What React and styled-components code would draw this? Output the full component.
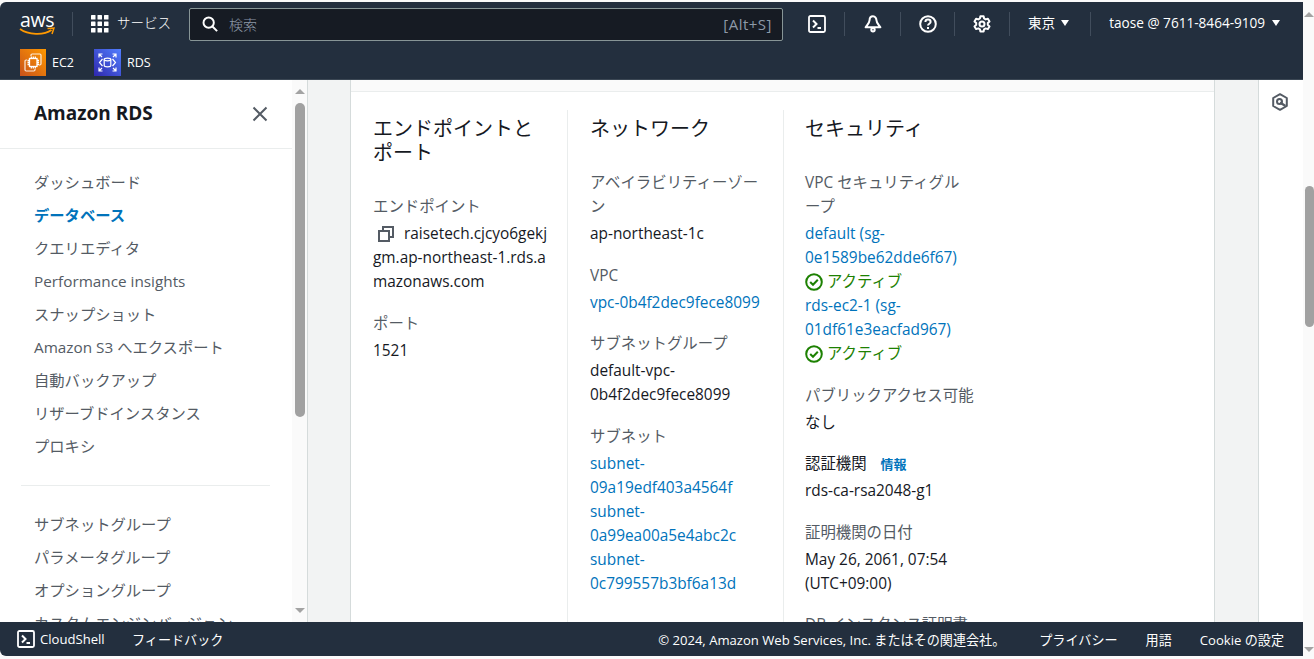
import React from "react";
import styled, { createGlobalStyle } from "styled-components";

const FONT = `"Open Sans", "Noto Sans CJK JP", sans-serif`;

const Global = createGlobalStyle`
  html, body { margin: 0; padding: 0; background: #fff; height: 100%; overflow: hidden; }
  #root { height: 100%; }
  * { box-sizing: border-box; }
`;

const Page = styled.div`
  width: 1314px; height: 659px; display: flex; font-family: ${FONT}; background: #fff; overflow: hidden;
`;
const Frame = styled.div`
  width: 1303px; display: flex; flex-direction: column; padding-top: 2px; padding-bottom: 3px; background: #fafafa;
`;
const Header = styled.header`
  flex: none; height: 78px; background: #232f3e; border-top-left-radius: 6px; border-bottom: 1px solid #3b4754; display: flex; flex-direction: column;
`;
const TopRow = styled.div`
  height: 44px; display: flex; align-items: center; padding: 0 0 0 20px; flex: none;
`;
const Logo = styled.div`
  width: 34px; height: 24px; position: relative; color: #fff; font-size: 19.500px; line-height: 15px; letter-spacing: -0.3px; flex: none;
  svg { position: absolute; left: -1px; bottom: -1px; }
`;
const Sep = styled.span`
  flex: none; width: 1px; height: ${p => p.$h || 24}px; background: #414d5c; margin: ${p => p.$m || "0"};
`;
const ServicesButton = styled.div`
  display: flex; align-items: center; gap: 8px; color: #fff; font-size: 13.500px; font-weight: 300; line-height: 18px; margin-left: 18px; width: 98px; flex: none;
  span { margin-top: -3px; }
`;
const SearchBox = styled.div`
  width: 594px; height: 33px; flex: none; background: #161b23; border: 1px solid #879596; border-radius: 2px; display: flex; align-items: center; padding: 0 10px 2px 12px; color: #8d99a8; font-size: 14px;
  margin-top: 1px;
`;
const SearchText = styled.span`
  margin-left: 11px; flex: 1; font-weight: 300;
`;
const SearchKey = styled.span`
  font-size: 15px; letter-spacing: .5px;
`;
const IconSlot = styled.div`
  width: ${p => p.$w || 54}px; padding-left: ${p => p.$pl || 0}px; flex: none; display: flex; justify-content: center; align-items: center; color: #fff;
`;
const HeaderMenu = styled.div`
  flex: none; display: flex; align-items: center; gap: 6px; color: #fff; font-size: 13.600px; line-height: 18px; padding: ${p => p.$p}; 
  span { margin-top: -3px; }
`;
const Caret = styled.i`
  width: 0; height: 0; margin-left: ${p => p.$m || 0}px; margin-top: -2px; border-left: 4.500px solid transparent; border-right: 4.500px solid transparent; border-top: 6px solid #fff; flex: none;
`;
const FavRow = styled.div`
  display: flex; align-items: center; padding-left: 20px; height: 33px; flex: none; color: #fff; font-size: 12.500px;
`;
const Fav = styled.div`
  display: flex; align-items: center; gap: 6px; width: 74px; flex: none;
`;

const Main = styled.div`
  flex: 1; min-height: 0; display: flex; overflow: hidden;
`;
const Sidebar = styled.aside`
  width: 292px; flex: none; background: #fff; overflow: hidden;
`;
const SidebarHead = styled.div`
  height: 69px; display: flex; align-items: center; justify-content: space-between; padding: 0 24px 0 34px; border-bottom: 1px solid #eaeded;
  h2 { margin: -2px 0 0; font-size: 19px; font-weight: 700; color: #16191f; }
`;
const NavList = styled.ul`
  list-style: none; margin: 0; padding: ${p => p.$pad};
`;
const NavItem = styled.li`
  height: 33px; line-height: 33px; padding-left: 34px; font-size: 15.300px; white-space: nowrap; font-weight: ${p => (p.$active ? 700 : 400)}; color: ${p => (p.$active ? "#0073bb" : "#545b64")};
`;
const NavDivider = styled.hr`
  margin: 22px 22px 22px 21px; border: 0; border-top: 1px solid #eaeded;
`;
const Bar = styled.div`
  width: ${p => p.$w}px; flex: none; background: ${p => p.$bg || "#fafafa"}; display: flex; flex-direction: column; align-items: center; height: ${p => p.$h || "100%"};
`;
const Arrow = styled.i`
  flex: none; width: 0; height: 0; border-left: 5px solid transparent; border-right: 5px solid transparent; margin: ${p => p.$m};
  ${p => (p.$up ? "border-bottom: 5px solid #a3a3a3;" : "border-top: 5px solid #a3a3a3;")}
`;
const Track = styled.div`
  flex: 1; width: 100%; display: flex; justify-content: center; padding-top: ${p => p.$top}px;
`;
const Thumb = styled.div`
  width: ${p => p.$w}px; height: ${p => p.$h}px; margin-left: ${p => p.$ml || 0}px; background: #a1a1a1; border-radius: 5px;
`;
const Content = styled.main`
  flex: 1; min-width: 0; background: #f2f3f3; border-left: 1px solid #d5dbdb; padding-left: 42px; padding-right: 43px; overflow: hidden;
`;
const Card = styled.section`
  background: #fff; border-left: 1px solid #d5dbdb; border-right: 1px solid #d5dbdb; height: 100%; display: flex; flex-direction: column;
`;
const CardTop = styled.div`
  height: 12px; flex: none; background: #fafafa; border-bottom: 1px solid #eaeded;
`;
const Columns = styled.div`
  display: flex; padding: 18px 0 0 0; flex: 1; min-height: 0;
`;
const Column = styled.div`
  flex: none; width: ${p => p.$w}px; padding: 7px ${p => p.$pr}px 0 ${p => p.$pl}px; border-left: ${p => (p.$first ? "none" : "1px solid #eaeded")}; min-height: 640px;
`;
const ColTitle = styled.h3`
  margin: 0 0 30px; font-size: 20px; line-height: 24px; font-weight: 400; color: #16191f;
`;
const Field = styled.div`
  margin-bottom: 17.500px; font-size: 15.400px; line-height: 24px; color: #16191f;
`;
const Label = styled.div`
  color: #545b64; margin-bottom: 3px;
  a { margin-left: 14px; font-size: 13px; font-weight: 600; color: #0073bb; }
`;
const DarkLabel = styled(Label)`
  color: #16191f;
`;
const Value = styled.div`
  color: #16191f;
`;
const EndpointValue = styled(Value)`
  word-break: break-all;
  svg { vertical-align: -3px; margin: 0 10px 0 5px; }
`;
const LinkText = styled.a`
  display: block; color: #0073bb; text-decoration: none;
`;
const Status = styled.div`
  display: flex; align-items: center; gap: 4px; color: #1d8102; height: 24px;
`;
const Rail = styled.div`
  width: 45px; flex: none; background: #fff; border-left: 1px solid #d5dbdb; display: flex; justify-content: center; padding-top: 13px; padding-right: 2px; color: #545b64;
`;
const Footer = styled.footer`
  flex: none; height: 34px; background: #232f3e; border-bottom-left-radius: 6px; display: flex; align-items: center; color: #fff; font-size: 13.100px; padding: 0 19px 0 17px;
`;
const FooterShell = styled.div`
  display: flex; align-items: center; gap: 5px; width: 115px; flex: none;
`;
const FooterLinks = styled.nav`
  margin-left: auto; display: flex; gap: 28px; align-items: center;
  span:first-child { margin-right: 6px; }
`;

const ShellIcon = ({ s = 18 }) => (
  <svg width={s} height={s} viewBox="0 0 18 18" fill="none" stroke="#fff" strokeWidth="1.800">
    <rect x="1" y="1" width="16" height="16" rx="1.500" />
    <path d="M5 5.500 8.500 9 5 12.500M9.500 13h3.500" strokeWidth="2" />
  </svg>
);
const Grid = () => (
  <svg width="18" height="18" viewBox="0 0 18 18" fill="#fff">
    {[0, 6.5, 13].flatMap(x => [0, 6.5, 13].map(y => <rect key={x + "-" + y} x={x} y={y} width="4.500" height="4.500" rx=".5" />))}
  </svg>
);
const Search = () => (
  <svg width="16" height="16" viewBox="0 0 18 18" fill="none" stroke="#fff" strokeWidth="2.200">
    <circle cx="7.500" cy="7.500" r="5.800" /><path d="m11.500 11.500 5.500 5.500" />
  </svg>
);
const Bell = () => (
  <svg width="18" height="18" viewBox="0 0 18 18" fill="none" stroke="#fff" strokeWidth="2">
    <path d="M9 1.300c-2.300 0-3.400 2-3.400 3.800 0 3-2.300 5-4 7.200h14.800c-1.700-2.200-4-4.200-4-7.200 0-1.800-1.100-3.800-3.400-3.800Z" strokeLinejoin="round" />
    <circle cx="9" cy="14.800" r="1.700" />
  </svg>
);
const Help = () => (
  <svg width="18" height="18" viewBox="0 0 18 18" fill="none" stroke="#fff" strokeWidth="2">
    <circle cx="9" cy="9" r="7.800" />
    <path d="M6.400 7c0-1.500 1.100-2.400 2.600-2.400s2.600.9 2.600 2.300c0 1.800-2.600 1.900-2.600 3.700" />
    <path d="M9 12v2" />
  </svg>
);
const Gear = () => (
  <svg width="18" height="18" viewBox="0 0 18 18" fill="none" stroke="#fff" strokeWidth="2" strokeLinejoin="round">
    <circle cx="9" cy="9" r="2.500" />
    <path d="M7.400 1.200h3.200l.5 2.300 1.500.9 2.300-.7 1.600 2.700-1.700 1.600v1.800l1.700 1.600-1.600 2.700-2.300-.7-1.500.9-.5 2.300H7.400l-.5-2.300-1.500-.9-2.300.7-1.600-2.700 1.700-1.600V8l-1.700-1.600 1.600-2.700 2.300.7 1.500-.9Z" />
  </svg>
);
const Ec2Icon = () => (
  <svg width="26" height="27" viewBox="0 0 26 27">
    <defs><linearGradient id="ec" x1="0" y1="1" x2="1" y2="0"><stop offset="0" stopColor="#c8511b" /><stop offset="1" stopColor="#ff9900" /></linearGradient></defs>
    <rect width="26" height="27" fill="url(#ec)" />
    <g fill="none" stroke="#fff" strokeWidth="1.200" strokeOpacity=".85">
      <path d="M11 7V6.200c0-.7.500-1.200 1.200-1.200h7.600c.7 0 1.200.5 1.200 1.200v8.600c0 .7-.5 1.200-1.200 1.200H19" />
      <path d="M7 11H6.200c-.7 0-1.200.5-1.200 1.200v8.600c0 .7.500 1.200 1.200 1.200h7.600c.7 0 1.200-.5 1.200-1.200V20" />
    </g>
    <g fill="none" stroke="#fff" strokeWidth="1.300">
      <rect x="9.500" y="9.500" width="7.500" height="8" />
      <path d="M11.300 7.500v2M13.300 7.500v2M15.300 7.500v2M11.300 17.500v2M13.300 17.500v2M15.300 17.500v2M7.500 11.500h2M7.500 13.500h2M7.500 15.500h2M17 11.500h2M17 13.500h2M17 15.500h2" />
    </g>
  </svg>
);
const RdsIcon = () => (
  <svg width="27" height="27" viewBox="0 0 27 27">
    <defs><linearGradient id="rd" x1="0" y1="1" x2="1" y2="0"><stop offset="0" stopColor="#2e27ad" /><stop offset="1" stopColor="#527fff" /></linearGradient></defs>
    <rect width="27" height="27" fill="url(#rd)" />
    <g fill="none" stroke="#fff" strokeWidth="1.200">
      <path d="M5 8.500V5h3.500M5 5l3 3M22 8.500V5h-3.500M22 5l-3 3M5 18.500V22h3.500M5 22l3-3M22 18.500V22h-3.500M22 22l-3-3" />
      <ellipse cx="13.500" cy="10.500" rx="3.300" ry="1.300" />
      <path d="M10.200 10.500v6c0 .7 1.500 1.300 3.300 1.300s3.300-.6 3.300-1.300v-6" />
      <path d="M8.500 10 5.500 13.500l3 3.500M18.500 10l3 3.500-3 3.500" />
    </g>
  </svg>
);
const Copy = () => (
  <svg width="16" height="16" viewBox="0 0 16 16" fill="none" stroke="#545b64" strokeWidth="2">
    <rect x="1" y="5" width="10" height="10" />
    <path d="M5 4V1h10v10h-3" />
  </svg>
);
const Check = () => (
  <svg width="18" height="18" viewBox="0 0 18 18" fill="none" stroke="#1d8102" strokeWidth="2">
    <circle cx="9" cy="9" r="7.800" />
    <path d="m5.200 9 2.800 2.800 4.800-5" />
  </svg>
);
const Close = () => (
  <svg width="16" height="16" viewBox="0 0 16 16" fill="none" stroke="#545b64" strokeWidth="2">
    <path d="m1.500 1.500 13 13M14.500 1.500l-13 13" />
  </svg>
);
const Hex = () => (
  <svg width="16" height="18" viewBox="0 0 16 18" fill="none" stroke="#545b64" strokeWidth="2">
    <path d="M8 1.200 14.800 5v8L8 16.800 1.200 13V5Z" strokeLinejoin="round" />
    <circle cx="7.500" cy="8.500" r="2.500" />
    <path d="M8 9.500l5.500 3.500" strokeWidth="2.400" />
  </svg>
);

const nav1 = ["ダッシュボード", "データベース", "クエリエディタ", "Performance insights", "スナップショット", "Amazon S3 へエクスポート", "自動バックアップ", "リザーブドインスタンス", "プロキシ"];
const nav2 = ["サブネットグループ", "パラメータグループ", "オプショングループ", "カスタムエンジンバージョン"];

export default function App() {
  return (
    <Page>
      <Global />
      <Frame>
        <Header>
          <TopRow>
            <Logo>
              aws
              <svg width="36" height="10" viewBox="0 0 36 10" fill="none">
                <path d="M1 2c8 6 24 6.500 31.500 1" stroke="#ff9900" strokeWidth="1.800" />
                <path d="M28.500 1.500 35 1l-2 6" stroke="#ff9900" strokeWidth="1.500" />
              </svg>
            </Logo>
            <Sep $m="0 0 0 18px" />
            <ServicesButton><Grid /><span>サービス</span></ServicesButton>
            <SearchBox>
              <Search />
              <SearchText>検索</SearchText>
              <SearchKey>[Alt+S]</SearchKey>
            </SearchBox>
            <IconSlot $w={61} $pl={7}><ShellIcon /></IconSlot>
            <Sep />
            <IconSlot $w={55}><Bell /></IconSlot>
            <Sep />
            <IconSlot $w={53}><Help /></IconSlot>
            <Sep />
            <IconSlot><Gear /></IconSlot>
            <Sep />
            <HeaderMenu $p="0 21px 0 18px"><span>東京</span><Caret $m={0} /></HeaderMenu>
            <Sep />
            <HeaderMenu $p="0 0 0 18px"><span>taose @ 7611-8464-9109</span><Caret $m={1} /></HeaderMenu>
          </TopRow>
          <FavRow>
            <Fav><Ec2Icon />EC2</Fav>
            <Fav><RdsIcon />RDS</Fav>
          </FavRow>
        </Header>
        <Main>
          <Sidebar>
            <SidebarHead><h2>Amazon RDS</h2><Close /></SidebarHead>
            <NavList $pad="17px 0 0">
              {nav1.map((n, i) => <NavItem key={n} $active={i === 1}>{n}</NavItem>)}
            </NavList>
            <NavDivider />
            <NavList $pad="0">
              {nav2.map(n => <NavItem key={n}>{n}</NavItem>)}
            </NavList>
          </Sidebar>
          <Bar $w={15}>
            <Arrow $up $m="9px 0 0" />
            <Track $top={9}><Thumb $w={10} $h={314} /></Track>
            <Arrow $m="0 0 9px" />
          </Bar>
          <Content>
            <Card>
              <CardTop />
              <Columns>
                <Column $first $w={216} $pl={22} $pr={18}>
                  <ColTitle>エンドポイントと<br />ポート</ColTitle>
                  <Field>
                    <Label>エンドポイント</Label>
                    <EndpointValue><Copy />raisetech.cjcyo6gekjgm.ap-northeast-1.rds.amazonaws.com</EndpointValue>
                  </Field>
                  <Field>
                    <Label>ポート</Label>
                    <Value>1521</Value>
                  </Field>
                </Column>
                <Column $w={216} $pl={22} $pr={22}>
                  <ColTitle>ネットワーク</ColTitle>
                  <Field><Label>アベイラビリティーゾー<br />ン</Label><Value>ap-northeast-1c</Value></Field>
                  <Field><Label>VPC</Label><LinkText>vpc-0b4f2dec9fece8099</LinkText></Field>
                  <Field><Label>サブネットグループ</Label><Value>default-vpc-<br />0b4f2dec9fece8099</Value></Field>
                  <Field>
                    <Label>サブネット</Label>
                    <LinkText>subnet-<br />09a19edf403a4564f</LinkText>
                    <LinkText>subnet-<br />0a99ea00a5e4abc2c</LinkText>
                    <LinkText>subnet-<br />0c799557b3bf6a13d</LinkText>
                  </Field>
                </Column>
                <Column $w={210} $pl={21} $pr={10}>
                  <ColTitle>セキュリティ</ColTitle>
                  <Field>
                    <Label>VPC セキュリティグル<br />ープ</Label>
                    <LinkText>default (sg-<br />0e1589be62dde6f67)</LinkText>
                    <Status><Check />アクティブ</Status>
                    <LinkText>rds-ec2-1 (sg-<br />01df61e3eacfad967)</LinkText>
                    <Status><Check />アクティブ</Status>
                  </Field>
                  <Field><Label>パブリックアクセス可能</Label><Value>なし</Value></Field>
                  <Field><DarkLabel>認証機関<a>情報</a></DarkLabel><Value>rds-ca-rsa2048-g1</Value></Field>
                  <Field><Label>証明機関の日付</Label><Value>May 26, 2061, 07:54<br />(UTC+09:00)</Value></Field>
                  <Field><Label>DB インスタンス証明書</Label></Field>
                </Column>
              </Columns>
            </Card>
          </Content>
          <Rail><Hex /></Rail>
        </Main>
        <Footer>
          <FooterShell><ShellIcon />CloudShell</FooterShell>
          <span>フィードバック</span>
          <FooterLinks>
            <span>© 2024, Amazon Web Services, Inc. またはその関連会社。</span>
            <span>プライバシー</span>
            <span>用語</span>
            <span>Cookie の設定</span>
          </FooterLinks>
        </Footer>
      </Frame>
      <Bar $w={11} $h="659px">
        <Arrow $up $m="12px 0 0" />
        <Track $top={169}><Thumb $w={9} $h={141} $ml={2} /></Track>
        <Arrow $m="0 0 7px" />
      </Bar>
    </Page>
  );
}
